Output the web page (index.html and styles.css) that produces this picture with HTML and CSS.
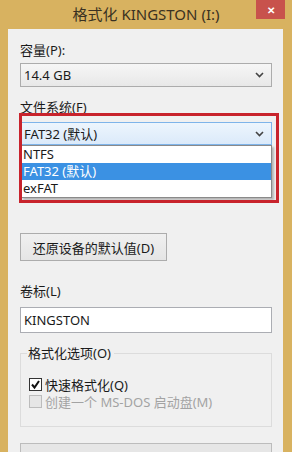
FILE: index.html
```html
<!DOCTYPE html>
<html lang="zh-CN">

<head>
  <meta charset="UTF-8">
  <meta name="viewport" content="width=device-width, initial-scale=1.0">
  <title>格式化 KINGSTON (I:)</title>

  <link rel="stylesheet" href="styles.css">
</head>

<body>
  <div class="titlebar">
    <span class="title">格式化 KINGSTON (I:)</span>
    <span class="close">&#x2715;</span>
  </div>

  <div class="dialog">
    <div class="label">容量(P):</div>
    <div class="select">
      <span>14.4 GB</span>
      <svg class="chev" width="9" height="6" viewBox="0 0 9 6"><path d="M1 1 L4.5 4.5 L8 1" fill="none" stroke="#444" stroke-width="1.6"/></svg>
    </div>

    <div class="label gap-top">文件系统(F)</div>
    <div class="combo">
      <div class="select focused">
        <span>FAT32 (默认)</span>
        <svg class="chev" width="9" height="6" viewBox="0 0 9 6"><path d="M1 1 L4.5 4.5 L8 1" fill="none" stroke="#444" stroke-width="1.6"/></svg>
      </div>
      <ul class="droplist">
        <li>NTFS</li>
        <li class="active">FAT32 (默认)</li>
        <li>exFAT</li>
      </ul>
      <div class="mark"></div>
    </div>

    <!-- covered by the open list -->
    <div class="label alloc-label covered">分配单元大小(A)</div>
    <div class="select alloc covered"></div>

    <button class="reset" type="button">还原设备的默认值(D)</button>

    <div class="label volume-label">卷标(L)</div>
    <input class="volume" type="text" value="KINGSTON">

    <fieldset class="options">
      <legend>格式化选项(O)</legend>
      <label class="check">
        <span class="box">
          <svg width="11" height="11" viewBox="0 0 11 11"><path d="M2 5.5 L4.5 8.5 L9 2" fill="none" stroke="#111" stroke-width="2"/></svg>
        </span>
        快速格式化(Q)
      </label>
      <label class="check disabled">
        <span class="box"></span>
        创建一个 MS-DOS 启动盘(M)
      </label>
    </fieldset>

    <div class="progress"></div>
  </div>
</body>

</html>
```

FILE: styles.css
```css
body {
  margin: 0;
  background-color: #d8b260;
  font-family: 'Noto Sans', 'Noto Sans CJK SC', sans-serif;
  font-size: 13px;
  color: #1a1a1a;
  overflow: hidden;
}

.titlebar {
  position: relative;
  height: 29px;
  display: flex;
  align-items: center;
  justify-content: center;
}

.title {
  font-size: 15px;
  color: #3a3122;
  margin-top: -2px;
}

.close {
  position: absolute;
  top: 0;
  right: 7px;
  width: 29px;
  height: 19px;
  background-color: #c8524c;
  color: #fff;
  font-size: 10px;
  font-weight: bold;
  display: flex;
  align-items: center;
  justify-content: center;
}

.dialog {
  margin-left: 8px;
  width: 275px;
  height: 440px;
  box-sizing: border-box;
  padding: 13px 11px 0 12px;
  background-color: #f0f0f0;
}

.label {
  line-height: 16px;
}

.gap-top {
  margin-top: 12px;
}

.select {
  margin-top: 5px;
  height: 24px;
  box-sizing: border-box;
  border: 1px solid #acacac;
  background: linear-gradient(#f6f6f6, #e8e8e8);
  display: flex;
  align-items: center;
  justify-content: space-between;
  padding: 0 7px 0 3px;
}

.combo {
  position: relative;
  margin-top: 7px;
}

.combo .select {
  margin-top: 0;
  height: 23px;
}

.select.focused {
  border-color: #7eb4ea;
  background: linear-gradient(#edf5fd, #dbeafa);
}

.droplist {
  position: absolute;
  top: 100%;
  left: 1px;
  right: 0;
  margin: 0;
  padding: 0;
  list-style: none;
  background-color: #fff;
  border: 1px solid #8a8a8a;
  box-shadow: 2px 2px 2px rgba(0, 0, 0, 0.25);
}

.droplist li {
  height: 17px;
  line-height: 17px;
  padding-left: 1px;
}

.droplist li.active {
  background-color: #3b91e3;
  color: #fff;
}

.mark {
  position: absolute;
  top: -9px;
  left: -1px;
  right: -7px;
  height: 90px;
  border: 3px solid #c8232c;
  box-sizing: border-box;
}

.covered {
  visibility: hidden;
}

.alloc-label {
  margin-top: 8px;
}

.alloc {
  margin-top: 3px;
}

.reset {
  display: block;
  margin-top: 37px;
  width: 147px;
  height: 28px;
  border: 1px solid #acacac;
  background: linear-gradient(#f0f0f0, #e5e5e5);
  font-family: inherit;
  font-size: 13px;
  color: #1a1a1a;
  padding: 0;
}

.volume-label {
  margin-top: 22px;
}

.volume {
  display: block;
  margin-top: 8px;
  width: 100%;
  height: 26px;
  box-sizing: border-box;
  border: 1px solid #abadb3;
  background-color: #fff;
  padding: 0 3px;
  font-family: inherit;
  font-size: 13px;
  color: #1a1a1a;
}

.options {
  margin: 12px 0 0;
  padding: 15px 0 16px 8px;
  border: 1px solid #dcdcdc;
  min-width: 0;
}

.options legend {
  padding: 0 3px 0 1px;
  margin-left: -2px;
  line-height: 16px;
}

.check {
  display: flex;
  align-items: center;
  gap: 3px;
  height: 17px;
}

.box {
  width: 13px;
  height: 13px;
  box-sizing: border-box;
  border: 1px solid #333;
  background-color: #fff;
  display: flex;
  align-items: center;
  justify-content: center;
}

.check.disabled {
  color: #a3a3a3;
}

.check.disabled .box {
  border-color: #bcbcbc;
  background-color: #e6e6e6;
}

.progress {
  margin-top: 16px;
  height: 20px;
  border: 1px solid #bcbcbc;
  background-color: #e6e6e6;
}
```
